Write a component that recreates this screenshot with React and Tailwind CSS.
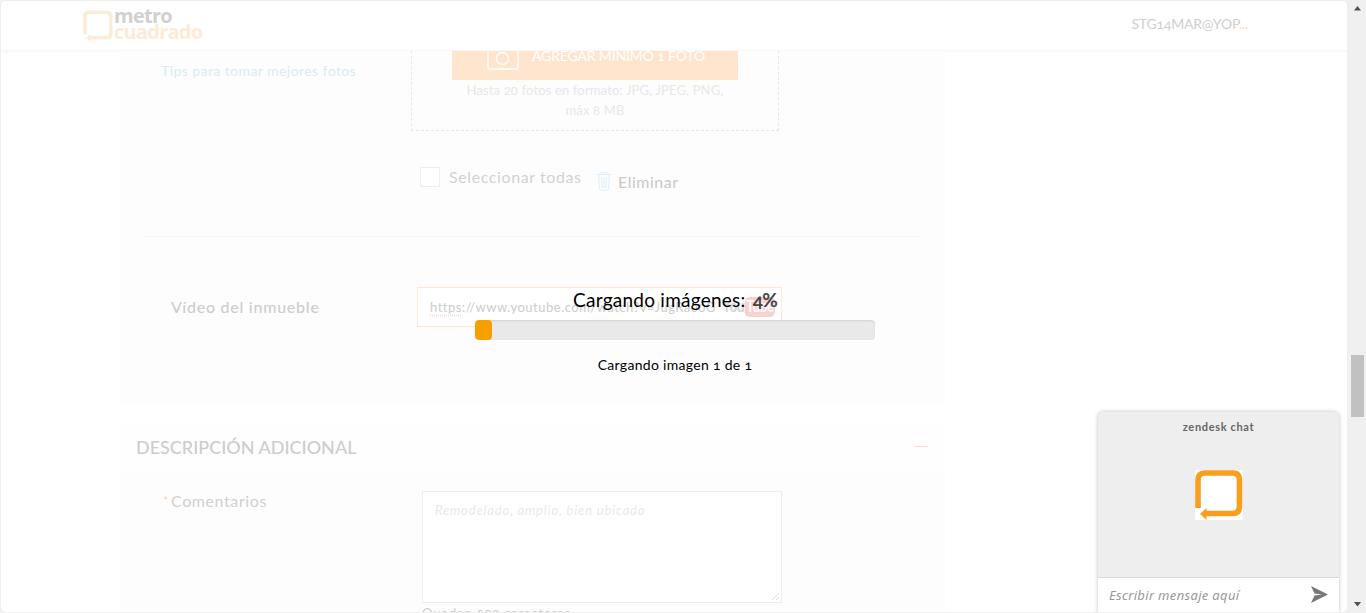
const Mark = ({ className, stroke = "#fb9e1e" }) => (
  <svg className={className} viewBox="0 0 48 50" fill="none">
    <path d="M3 38V10Q3 3 10 3H38Q44.500 3 44.500 10V36Q44.500 43.5 38 43.5H10" stroke={stroke} strokeWidth="5.6" />
    <path d="M5 44L11.5 38V50Z" fill={stroke} />
  </svg>
);

function Header() {
  return (
    <header className="flex h-[50px] shrink-0 items-start justify-between border-b border-[#f7f7f7] bg-white pl-[82px] pr-[99px] shadow-[0_1px_3px_rgba(0,0,0,0.03)]">
      <div className="flex">
        <Mark className="mt-[9px] h-[32px] w-[30px]" stroke="#fdebd6" />
        <div className="ml-[1px] mt-[7px] font-['Open_Sans',sans-serif] text-[20px] font-bold leading-[15px] tracking-[-0.75px]">
          <div className="text-[#d0d0d0]">metro</div>
          <div className="mt-px text-[#fdebd6]">cuadrado</div>
        </div>
      </div>
      <span className="mt-[13px] text-[14px] leading-[20px] tracking-[-0.2px] text-[#cfcfcf]">STG14MAR@YOP<span className="text-[#fbdcc0]">...</span></span>
    </header>
  );
}

function Photos() {
  return (
    <div className="flex h-[80px] pl-[41px]">
      <span className="mt-[10px] w-[250px] text-[14px] leading-[20px] tracking-[0.43px] text-[#d8ebf6]">Tips para tomar mejores fotos</span>
      <div className="flex w-[368px] flex-col items-center border border-t-0 border-dashed border-[#e9e9e9]">
        <div className="flex h-[29px] w-[286px] items-start overflow-hidden bg-[#ffe5cd] pl-[35px] text-white">
          <svg className="h-[19px] w-[32px] shrink-0" viewBox="0 0 32 19" fill="none" stroke="currentColor" strokeWidth="1.3">
            <path d="M1 0V16Q1 18 3 18H29Q31 18 31 16V0" />
            <circle cx="15.5" cy="7.5" r="6" />
          </svg>
          <span className="ml-[13px] mt-[-5px] whitespace-nowrap text-[14px] leading-[20px] tracking-[-0.15px]">AGREGAR MÍNIMO 1 FOTO</span>
        </div>
        <p className="text-center text-[13px] leading-[20px] tracking-[0.15px] text-[#e8e8e8]">
          Hasta 20 fotos en formato: JPG, JPEG, PNG,<br />máx 8 MB
        </p>
      </div>
    </div>
  );
}

function Selection() {
  return (
    <div className="mt-[36px] flex h-[69px] items-start pl-[300px] text-[16px] leading-[20px]">
      <span className="size-5 border border-[#eeeeee] bg-white" />
      <span className="ml-[9px] w-[148px] tracking-[0.6px] text-[#d2d2d2]">Seleccionar todas</span>
      <svg className="mt-[5px] h-[19px] w-[14px]" viewBox="0 0 14 19" fill="none" stroke="#dfeff8" strokeWidth="1">
        <path d="M0 2.5H14M4 2V.5H10V2M1.5 3L2.5 16.5Q2.7 18.3 4.2 18.3H9.8Q11.3 18.3 11.5 16.5L12.5 3M4.5 5L5 16M7 5V16M9.500 5L9 16" />
      </svg>
      <span className="ml-[7px] mt-[5px] tracking-[0.5px] text-[#c9c9c9]">Eliminar</span>
    </div>
  );
}

function Video() {
  return (
    <div className="flex pl-[51px] pt-[50px]">
      <span className="mt-[10px] w-[246px] text-[16px] font-medium leading-[20px] tracking-[0.75px] text-[#cdcdcd]">Vídeo del inmueble</span>
      <div className="flex h-[40px] w-[365px] items-center border border-[#fee9d2] bg-white pl-[12px] pr-[6px]">
        <span className="w-[290px] shrink-0 overflow-hidden whitespace-nowrap text-[13px] leading-[20px] tracking-[0.5px] text-[#cccccc]">
          <span className="underline decoration-[#fbd2d2] decoration-dotted underline-offset-[3px]">https</span>://www.youtube.com/watch?v=JugRa00G
        </span>
        <span className="ml-auto flex w-[54px] shrink-0 origin-right scale-x-[0.8] items-center justify-end font-['Liberation_Sans',sans-serif] text-[16px] font-bold leading-[20px] tracking-[-0.8px]">
          <span className="mr-px text-[#d5d5d5]">You</span>
          <span className="rounded-[6px] bg-[#fcd0cf] px-[2px] text-white">Tube</span>
        </span>
      </div>
    </div>
  );
}

function Description() {
  return (
    <section className="mt-[19px] flex h-[189px] w-[825px] flex-col overflow-hidden bg-[#fdfdfd]">
      <div className="flex h-[48px] shrink-0 items-center justify-between bg-[#fefefe] pl-[16px] pr-[17px]">
        <h2 className="text-[18px] font-medium leading-[24px] text-[#cdcdcd]">DESCRIPCIÓN ADICIONAL</h2>
        <span className="mb-[2px] h-px w-[14px] bg-[#fedad6]" />
      </div>
      <div className="flex pl-[43px] pt-[20px]">
        <div className="flex w-[259px] text-[16px] leading-[20px] tracking-[0.6px] text-[#d0d0d0]">
          <span className="w-[8px] text-[12px] text-[#fdd3b8]">*</span>Comentarios
        </div>
        <div>
          <div className="relative h-[112px] w-[360px] border border-[#eeeeee] bg-white pl-[12px] pt-[8px] text-[13px] italic leading-[20px] tracking-[0.83px] text-[#e9e9e9]">
            Remodelado, amplio, bien ubicado
            <svg className="absolute bottom-px right-px size-[9px]" viewBox="0 0 9 9" stroke="#cccccc" strokeDasharray="1 .6"><path d="M1 8L8 1M5 8L8 5" /></svg>
          </div>
          <p className="text-[13px] leading-[20px] tracking-[0.83px] text-[#cfcfcf]">Quedan <span className="oldstyle-nums">500</span> caracteres</p>
        </div>
      </div>
    </section>
  );
}

function Loading() {
  return (
    <div className="absolute left-[474px] top-[288px] flex w-[400px] flex-col items-center text-black">
      <p className="whitespace-nowrap text-[19px] leading-[22px] tracking-[0.25px]">Cargando imágenes: <strong className="ml-[2px] tracking-[-0.8px] text-[#444444]">4%</strong></p>
      <div className="mt-[9px] h-[20px] w-full overflow-hidden rounded-[4px] bg-[#e9e9e9] shadow-[inset_0_1px_2px_rgba(0,0,0,0.1)]">
        <div className="h-full w-[17px] rounded-[4px] bg-[#f6a000]" />
      </div>
      <p className="mt-[15px] text-[14px] leading-[20px] tracking-[0.3px]">Cargando imagen 1 de 1</p>
    </div>
  );
}

function Chat() {
  return (
    <aside className="absolute bottom-[-1px] right-[8px] flex h-[201px] w-[241px] flex-col overflow-hidden rounded-t-[5px] bg-[#eeeeee] shadow-[0_0_4px_rgba(0,0,0,0.25)]">
      <p className="mt-[7px] text-center text-[11px] font-bold leading-[16px] tracking-[0.65px] text-[#666666]">zendesk chat</p>
      <div className="mx-auto mt-[35px] h-[50px] w-[48px] bg-white"><Mark className="size-full" /></div>
      <div className="mt-auto flex h-[36px] items-center justify-between border-t border-[#d8d8d8] bg-white pl-[11px] pr-[11px]">
        <span className="font-['Noto_Sans',sans-serif] text-[13px] italic tracking-[0.33px] text-[#999999]">Escribir mensaje aquí</span>
        <svg className="mb-[3px] h-[17px] w-[17px]" viewBox="0 0 17 17" fill="#777777"><path d="M0 0L17 8.500L0 17L3.500 9.500L11 8.500L3.500 7.500Z" /></svg>
      </div>
    </aside>
  );
}

export default function App() {
  return (
    <div className="flex h-[613px] w-[1366px] overflow-hidden bg-[#f0f0f0] font-[Lato,sans-serif] oldstyle-nums">
      <main className="relative flex w-[1348px] flex-col overflow-hidden rounded-[6px] border border-[#eeeeee] bg-white">
        <Header />
        <div className="ml-[119px]">
          <section className="h-[353px] w-[825px] bg-[#fdfdfd]">
            <Photos />
            <Selection />
            <div className="ml-[23px] mr-[24px] h-px bg-[#f6f6f6]" />
            <Video />
          </section>
          <Description />
        </div>
        <Loading />
        <Chat />
      </main>
      <div className="flex w-[18px] flex-col items-center bg-[#f0f0f0] py-[6px]">
        <svg className="h-[5px] w-[7px]" viewBox="0 0 7 5" fill="#505050"><path d="M3.500 0L7 4.500H0Z" /></svg>
        <div className="mt-[344px] h-[62px] w-[13px] bg-[#c1c1c1]" />
        <svg className="mt-auto h-[5px] w-[7px]" viewBox="0 0 7 5" fill="#505050"><path d="M0 0H7L3.500 4.500Z" /></svg>
      </div>
    </div>
  );
}
